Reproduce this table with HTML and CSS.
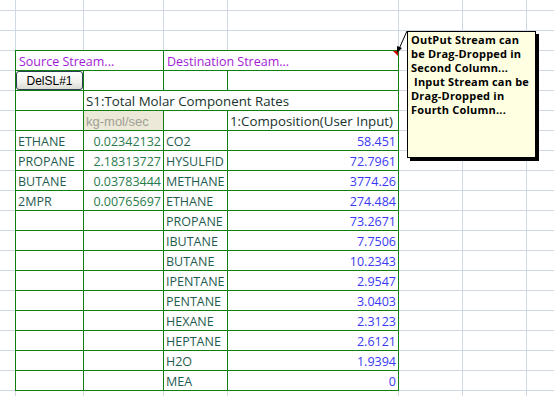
FILE: index.html
```html
<!DOCTYPE html>
<html>
<head>
<meta charset="utf-8">
<link rel="stylesheet" href="styles.css">
</head>
<body>
<div class="sheet">
  <div class="tbl">
    <div class="t head span2">Source Stream...</div>
    <div class="t head span2">Destination Stream...<span class="flag"></span></div>

    <div class="t btncell"><button class="btn">DelSL#1</button></div>
    <div class="t"></div>
    <div class="t"></div>
    <div class="t"></div>

    <div class="t"></div>
    <div class="t dark span3">S1:Total Molar Component Rates</div>

    <div class="t"></div>
    <div class="t units">kg-mol/sec</div>
    <div class="t"></div>
    <div class="t dark">1:Composition(User Input)</div>

    <div class="t name">ETHANE</div><div class="t rate">0.02342132</div><div class="t name">CO2</div><div class="t num">58.451</div>
    <div class="t name">PROPANE</div><div class="t rate">2.18313727</div><div class="t name">HYSULFID</div><div class="t num">72.7961</div>
    <div class="t name">BUTANE</div><div class="t rate">0.03783444</div><div class="t name">METHANE</div><div class="t num">3774.26</div>
    <div class="t name">2MPR</div><div class="t rate">0.00765697</div><div class="t name">ETHANE</div><div class="t num">274.484</div>
    <div class="t"></div><div class="t"></div><div class="t name">PROPANE</div><div class="t num">73.2671</div>
    <div class="t"></div><div class="t"></div><div class="t name">IBUTANE</div><div class="t num">7.7506</div>
    <div class="t"></div><div class="t"></div><div class="t name">BUTANE</div><div class="t num">10.2343</div>
    <div class="t"></div><div class="t"></div><div class="t name">IPENTANE</div><div class="t num">2.9547</div>
    <div class="t"></div><div class="t"></div><div class="t name">PENTANE</div><div class="t num">3.0403</div>
    <div class="t"></div><div class="t"></div><div class="t name">HEXANE</div><div class="t num">2.3123</div>
    <div class="t"></div><div class="t"></div><div class="t name">HEPTANE</div><div class="t num">2.6121</div>
    <div class="t"></div><div class="t"></div><div class="t name">H2O</div><div class="t num">1.9394</div>
    <div class="t"></div><div class="t"></div><div class="t name">MEA</div><div class="t num">0</div>
  </div>

  <div class="c"></div><div class="c"></div><div class="c"></div><div class="c"></div><div class="c"></div><div class="c"></div><div class="c"></div><div class="c"></div><div class="c"></div><div class="c"></div>
  <div class="c"></div><div class="c"></div><div class="c"></div><div class="c"></div><div class="c"></div><div class="c"></div><div class="c"></div><div class="c"></div><div class="c"></div><div class="c"></div>
  <div class="c"></div><div class="c"></div><div class="c"></div><div class="c"></div><div class="c"></div><div class="c"></div><div class="c"></div><div class="c"></div><div class="c"></div><div class="c"></div>
  <div class="c"></div><div class="c"></div><div class="c"></div><div class="c"></div><div class="c"></div><div class="c"></div><div class="c"></div><div class="c"></div><div class="c"></div><div class="c"></div>
  <div class="c"></div><div class="c"></div><div class="c"></div><div class="c"></div><div class="c"></div><div class="c"></div><div class="c"></div><div class="c"></div><div class="c"></div><div class="c"></div>
  <div class="c"></div><div class="c"></div><div class="c"></div><div class="c"></div><div class="c"></div><div class="c"></div><div class="c"></div><div class="c"></div><div class="c"></div><div class="c"></div>
  <div class="c"></div><div class="c"></div><div class="c"></div><div class="c"></div><div class="c"></div><div class="c"></div><div class="c"></div><div class="c"></div><div class="c"></div><div class="c"></div>
  <div class="c"></div><div class="c"></div><div class="c"></div><div class="c"></div><div class="c"></div><div class="c"></div><div class="c"></div><div class="c"></div><div class="c"></div><div class="c"></div>
  <div class="c"></div><div class="c"></div><div class="c"></div><div class="c"></div><div class="c"></div><div class="c"></div><div class="c"></div><div class="c"></div><div class="c"></div><div class="c"></div>
  <div class="c"></div><div class="c"></div><div class="c"></div><div class="c"></div><div class="c"></div><div class="c"></div><div class="c"></div><div class="c"></div><div class="c"></div><div class="c"></div>
</div>

<svg class="arrow" width="20" height="30" viewBox="0 0 20 30">
  <line x1="17" y1="1" x2="9" y2="19" stroke="#000" stroke-width="1"/>
  <polygon points="7,23 7,16 12,18" fill="#000"/>
</svg>
<div class="comment">
  <div>OutPut Stream can</div>
  <div>be Drag-Dropped in</div>
  <div>Second Column...</div>
  <div>&nbsp;Input Stream can be</div>
  <div>Drag-Dropped in</div>
  <div>Fourth Column...</div>
</div>
</body>
</html>
```
FILE: styles.css
```css
html, body {
  margin: 0;
  padding: 0;
  background: #fff;
  overflow: hidden;
}
body {
  width: 554px;
  height: 396px;
  position: relative;
}
.sheet {
  display: grid;
  grid-template-columns: 15px 67px 79px 63px 170px 63px 63px 1fr;
  grid-template-rows: 10px repeat(20, 19px);
  gap: 1px;
  background: #d0d7e5;
  width: 554px;
  height: 396px;
  overflow: hidden;
}
.c {
  background: #fff;
}
.tbl {
  grid-column: 2 / 6;
  grid-row: 4 / 21;
  margin: -1px;
  display: grid;
  grid-template-columns: 67px 79px 63px 170px;
  grid-auto-rows: 19px;
  gap: 1px;
  padding: 1px;
  background: #0e7d12;
  font-family: "Open Sans", "Liberation Sans", sans-serif;
  font-size: 12.5px;
}
.t {
  background: #fff;
  line-height: 19px;
  padding: 1px 2px 0 2px;
  height: 18px;
  white-space: nowrap;
  overflow: hidden;
  position: relative;
}
.span2 { grid-column: span 2; }
.span3 { grid-column: span 3; }
.head {
  color: #a31ad6;
  padding-left: 3px;
}
.dark {
  color: #17332c;
  padding-left: 2px;
  font-size: 13.3px;
}
.units {
  background: #ece9d8;
  color: #a09f96;
  font-family: "Liberation Sans", sans-serif;
  font-size: 13px;
}
.name {
  color: #1f5c4f;
  padding-left: 2px;
}
.rate {
  color: #2a7b4c;
  text-align: right;
  padding-right: 2px;
}
.num {
  color: #3a3af5;
  text-align: right;
  padding-right: 2px;
}
.flag {
  position: absolute;
  right: 0;
  top: 0;
  width: 0;
  height: 0;
  border-top: 5px solid #e00000;
  border-left: 5px solid transparent;
}
.btncell {
  padding: 0;
  height: 19px;
}
.btn {
  display: block;
  box-sizing: border-box;
  width: 67px;
  height: 19px;
  margin: 0;
  padding: 0;
  border: 1px solid #2d3f55;
  border-radius: 3px;
  background: linear-gradient(#ffffff 0%, #f2f2ee 55%, #dcdcd6 100%);
  font-family: "Liberation Sans", sans-serif;
  font-size: 12px;
  color: #000;
  line-height: 16px;
}
.arrow {
  position: absolute;
  left: 390px;
  top: 30px;
}
.comment {
  position: absolute;
  left: 407px;
  top: 31px;
  width: 124px;
  height: 124px;
  border: 1px solid #000;
  box-shadow: 3px 3px 0 #000;
  background: #ffffe1;
  font-family: "Open Sans", "Liberation Sans", sans-serif;
  font-weight: bold;
  font-size: 11px;
  line-height: 14px;
  letter-spacing: 0.2px;
  color: #000;
  padding: 1px 0 0 3px;
  box-sizing: content-box;
}
```
